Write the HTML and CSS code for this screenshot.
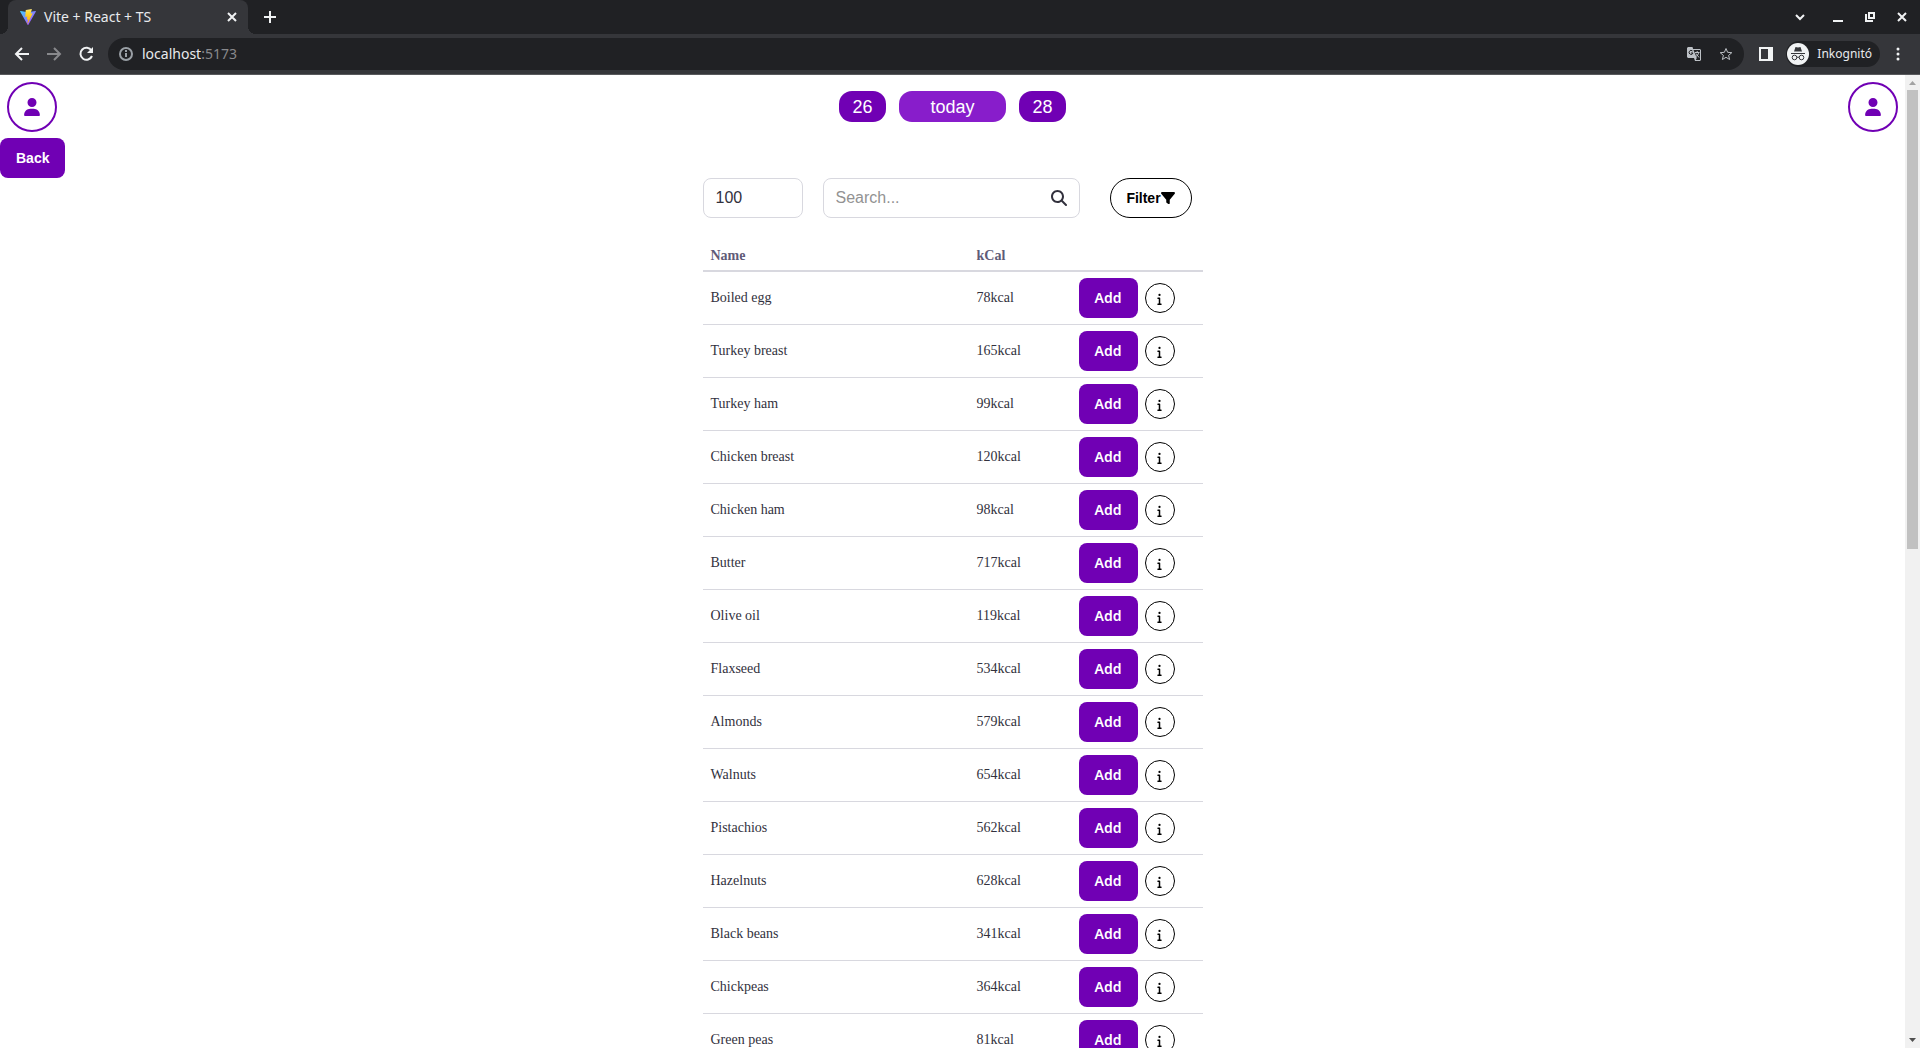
FILE: index.html
```html
<!DOCTYPE html>
<html lang="en">
<head>
<meta charset="utf-8">
<title>Vite + React + TS</title>
<link rel="stylesheet" href="styles.css">
</head>
<body>
<svg class="defs" aria-hidden="true">
  <symbol id="user" viewBox="0 0 448 512"><path d="M224 256A128 128 0 1 0 224 0a128 128 0 1 0 0 256zm-45.700 48C79.800 304 0 383.800 0 482.300C0 498.700 13.300 512 29.700 512H418.300c16.400 0 29.700-13.300 29.700-29.700C448 383.800 368.200 304 269.700 304H178.300z"/></symbol>
  <symbol id="info" viewBox="0 0 192 512"><path d="M48 80a48 48 0 1 1 96 0A48 48 0 1 1 48 80zM0 224c0-17.700 14.300-32 32-32H96c17.700 0 32 14.300 32 32V448h32c17.700 0 32 14.300 32 32s-14.300 32-32 32H32c-17.700 0-32-14.300-32-32s14.300-32 32-32H64V256H32c-17.700 0-32-14.300-32-32z"/></symbol>
</svg>

<header class="browser">
  <div class="tabs">
    <div class="tab">
      <svg class="favicon" viewBox="0 0 16 16">
        <defs>
          <linearGradient id="vite-v" x1="0" y1="0" x2="1" y2="1"><stop offset="0" stop-color="#41d1ff"/><stop offset="1" stop-color="#bd34fe"/></linearGradient>
          <linearGradient id="vite-bolt" x1="0" y1="0" x2="0" y2="1"><stop offset="0" stop-color="#ffea83"/><stop offset=".2" stop-color="#ffdd35"/><stop offset="1" stop-color="#ffa800"/></linearGradient>
        </defs>
        <path fill="url(#vite-v)" d="M15.900 2.500 8.400 15.700c-.2.300-.6.300-.8 0L.1 2.500c-.2-.3.100-.7.500-.6L8 3.200l7.400-1.300c.4-.1.700.3.500.6z"/>
        <path fill="url(#vite-bolt)" d="M11.800 0 6 1.100c-.1 0-.3.100-.3.300l-.4 6.400c0 .2.200.3.300.2l1.700-.4-.5 2.700c0 .2.100.3.300.2l1.100-.3-.8 4c0 .3.300.4.400.2l4.800-9.800c.1-.2 0-.4-.2-.3l-1.800.3 1.200-4.200z"/>
      </svg>
      <span class="tab-title">Vite + React + TS</span>
      <button class="chrome-button" aria-label="Close tab"><svg width="10" height="10" viewBox="0 0 10 10"><path d="m1 1 8 8M9 1 1 9"/></svg></button>
    </div>
    <button class="chrome-button new-tab" aria-label="New tab"><svg width="12" height="12" viewBox="0 0 12 12"><path d="M6 0v12M0 6h12"/></svg></button>
    <div class="window-buttons">
      <button class="chrome-button tab-search" aria-label="Search tabs"><svg width="10" height="10" viewBox="0 0 10 10"><path d="m1 3 4 4 4-4"/></svg></button>
      <button class="chrome-button" aria-label="Minimize"><svg width="10" height="10" viewBox="0 0 10 10"><path d="M0 9h10"/></svg></button>
      <button class="chrome-button" aria-label="Restore"><svg width="10" height="10" viewBox="0 0 10 10"><path d="M4 1h5v5H4zM1 2v7h7"/></svg></button>
      <button class="chrome-button" aria-label="Close"><svg width="10" height="10" viewBox="0 0 10 10"><path d="m1 1 8 8M9 1 1 9"/></svg></button>
    </div>
  </div>
  <div class="toolbar">
    <div class="history">
      <button class="chrome-button" aria-label="Back"><svg width="16" height="16" viewBox="0 0 16 16"><path d="M15 8H2M8 2 2 8l6 6"/></svg></button>
      <button class="chrome-button dim" aria-label="Forward"><svg width="16" height="16" viewBox="0 0 16 16"><path d="M1 8h13M8 2l6 6-6 6"/></svg></button>
      <button class="chrome-button" aria-label="Reload"><svg width="16" height="16" viewBox="0 0 16 16"><path d="M13.500 4.500A6 6 0 1 0 14 10"/><path class="solid" d="M15 1v6H9z"/></svg></button>
    </div>
    <div class="omnibox">
      <svg class="site-info" width="14" height="14" viewBox="0 0 14 14"><circle cx="7" cy="7" r="6"/><path d="M7 6v4M7 3v2"/></svg>
      <span class="url">localhost<span class="port">:5173</span></span>
      <button class="chrome-button translate" aria-label="Translate"><svg width="14" height="14" viewBox="0 0 14 14"><path class="solid" d="M1 0h4.500l.6 2H13l1 1v10l-1 1H8l-1-3H1l-1-1V1z"/><path fill="#202124" stroke="none" d="M6.500 3H13v10H8.800l1-2z"/><path class="cut" d="M5.500 4A2 2 0 1 0 6 6H4"/><path stroke-width="1" d="M8 5.500h4.500M10.200 4v1.500M11.700 5.500c-.3 2-1.500 3.300-3 4.300M9 6.500l3 4"/></svg></button>
      <button class="chrome-button star" aria-label="Bookmark"><svg width="14" height="14" viewBox="0 0 14 14"><path d="m7 1.500 1.600 3.800 4.200.4-3.200 2.700 1 4.100L7 10.300l-3.600 2.200 1-4.100-3.200-2.700 4.200-.4z"/></svg></button>
    </div>
    <button class="chrome-button" aria-label="Side panel"><svg width="14" height="14" viewBox="0 0 14 14"><path class="solid" fill-rule="evenodd" d="M0 0h14v14H0zM2 2v10h7V2z"/></svg></button>
    <button class="profile">
      <svg width="22" height="22" viewBox="0 0 22 22"><circle cx="11" cy="11" r="11" fill="#f1f3f4"/><path fill="#35363a" d="M8.500 4 11 4.500 13.500 4 15 8.500H7zM4 10h14v1H4z"/><g fill="none" stroke="#35363a"><circle cx="7.500" cy="14.500" r="2.300"/><circle cx="14.500" cy="14.500" r="2.300"/><path d="M9.800 14.500q1.200-1 2.400 0"/></g></svg>
      Inkognitó
    </button>
    <button class="chrome-button" aria-label="Menu"><svg width="4" height="14" viewBox="0 0 4 14"><circle class="solid" cx="2" cy="2" r="1.500"/><circle class="solid" cx="2" cy="7" r="1.500"/><circle class="solid" cx="2" cy="12" r="1.500"/></svg></button>
  </div>
</header>

<div class="viewport">
  <main class="page">
    <nav class="day-bar">
      <a class="avatar" href="#profile" aria-label="Profile"><svg width="16" height="18"><use href="#user"/></svg></a>
      <div class="days">
        <button class="day">26</button>
        <button class="day today">today</button>
        <button class="day">28</button>
      </div>
      <a class="avatar" href="#account" aria-label="Account"><svg width="16" height="18"><use href="#user"/></svg></a>
    </nav>
    <button class="primary">Back</button>

    <section class="foods">
      <form class="controls">
        <input class="field amount" type="text" value="100" aria-label="Amount">
        <div class="field search">
          <input type="text" placeholder="Search..." aria-label="Search">
          <svg width="16" height="16" viewBox="0 0 512 512"><path d="M416 208c0 45.900-14.900 88.300-40 122.700L502.600 457.400c12.500 12.500 12.500 32.800 0 45.300s-32.800 12.500-45.300 0L330.700 376c-34.400 25.200-76.800 40-122.700 40C93.100 416 0 322.900 0 208S93.100 0 208 0S416 93.100 416 208zM208 352a144 144 0 1 0 0-288 144 144 0 1 0 0 288z"/></svg>
        </div>
        <button class="filter" type="button">Filter<svg width="14" height="14" viewBox="0 0 512 512"><path d="M3.900 54.900C10.500 40.900 24.500 32 40 32H472c15.500 0 29.500 8.900 36.100 22.900s4.600 30.500-5.200 42.500L320 320.900V448c0 12.100-6.800 23.200-17.700 28.600s-23.800 4.300-33.500-3l-64-48c-8.100-6-12.800-15.500-12.800-25.600V320.900L9 97.300C-.7 85.400-2.800 68.800 3.900 54.900z"/></svg></button>
      </form>
      <table class="food-table">
        <thead><tr><th class="name">Name</th><th class="kcal">kCal</th><th></th></tr></thead>
        <tbody>
          <tr><td>Boiled egg</td><td>78kcal</td><td><div class="actions"><button class="primary add">Add</button><button class="info" aria-label="Details"><svg width="5" height="12"><use href="#info"/></svg></button></div></td></tr>
          <tr><td>Turkey breast</td><td>165kcal</td><td><div class="actions"><button class="primary add">Add</button><button class="info" aria-label="Details"><svg width="5" height="12"><use href="#info"/></svg></button></div></td></tr>
          <tr><td>Turkey ham</td><td>99kcal</td><td><div class="actions"><button class="primary add">Add</button><button class="info" aria-label="Details"><svg width="5" height="12"><use href="#info"/></svg></button></div></td></tr>
          <tr><td>Chicken breast</td><td>120kcal</td><td><div class="actions"><button class="primary add">Add</button><button class="info" aria-label="Details"><svg width="5" height="12"><use href="#info"/></svg></button></div></td></tr>
          <tr><td>Chicken ham</td><td>98kcal</td><td><div class="actions"><button class="primary add">Add</button><button class="info" aria-label="Details"><svg width="5" height="12"><use href="#info"/></svg></button></div></td></tr>
          <tr><td>Butter</td><td>717kcal</td><td><div class="actions"><button class="primary add">Add</button><button class="info" aria-label="Details"><svg width="5" height="12"><use href="#info"/></svg></button></div></td></tr>
          <tr><td>Olive oil</td><td>119kcal</td><td><div class="actions"><button class="primary add">Add</button><button class="info" aria-label="Details"><svg width="5" height="12"><use href="#info"/></svg></button></div></td></tr>
          <tr><td>Flaxseed</td><td>534kcal</td><td><div class="actions"><button class="primary add">Add</button><button class="info" aria-label="Details"><svg width="5" height="12"><use href="#info"/></svg></button></div></td></tr>
          <tr><td>Almonds</td><td>579kcal</td><td><div class="actions"><button class="primary add">Add</button><button class="info" aria-label="Details"><svg width="5" height="12"><use href="#info"/></svg></button></div></td></tr>
          <tr><td>Walnuts</td><td>654kcal</td><td><div class="actions"><button class="primary add">Add</button><button class="info" aria-label="Details"><svg width="5" height="12"><use href="#info"/></svg></button></div></td></tr>
          <tr><td>Pistachios</td><td>562kcal</td><td><div class="actions"><button class="primary add">Add</button><button class="info" aria-label="Details"><svg width="5" height="12"><use href="#info"/></svg></button></div></td></tr>
          <tr><td>Hazelnuts</td><td>628kcal</td><td><div class="actions"><button class="primary add">Add</button><button class="info" aria-label="Details"><svg width="5" height="12"><use href="#info"/></svg></button></div></td></tr>
          <tr><td>Black beans</td><td>341kcal</td><td><div class="actions"><button class="primary add">Add</button><button class="info" aria-label="Details"><svg width="5" height="12"><use href="#info"/></svg></button></div></td></tr>
          <tr><td>Chickpeas</td><td>364kcal</td><td><div class="actions"><button class="primary add">Add</button><button class="info" aria-label="Details"><svg width="5" height="12"><use href="#info"/></svg></button></div></td></tr>
          <tr><td>Green peas</td><td>81kcal</td><td><div class="actions"><button class="primary add">Add</button><button class="info" aria-label="Details"><svg width="5" height="12"><use href="#info"/></svg></button></div></td></tr>
        </tbody>
      </table>
    </section>
  </main>
  <div class="scrollbar" aria-hidden="true">
    <svg width="15" height="15" viewBox="0 0 15 15"><path fill="#a3a3a3" d="M4 10h7L7.500 6z"/></svg>
    <div class="track"><div class="thumb"></div></div>
    <svg width="15" height="15" viewBox="0 0 15 15"><path fill="#505050" d="M4 5h7L7.500 9z"/></svg>
  </div>
</div>
</body>
</html>
```
FILE: styles.css
```css
* { box-sizing: border-box; }

body {
  margin: 0;
  height: 100vh;
  display: flex;
  flex-direction: column;
  overflow: hidden;
  background: #fff;
  color: #32313d;
  font-family: "Liberation Serif", "Times New Roman", serif;
  font-size: 14px;
}

button { font: inherit; border: 0; padding: 0; cursor: pointer; }
svg { display: block; flex: none; }
.defs { position: absolute; width: 0; height: 0; }

/* Browser frame */
.browser {
  flex: none;
  background: #202124;
  color: #e8eaed;
  font-family: "Noto Sans", sans-serif;
}
.tabs { display: flex; align-items: center; height: 34px; padding-left: 8px; }
.tab {
  position: relative;
  display: flex;
  align-items: center;
  gap: 8px;
  width: 240px;
  height: 34px;
  padding: 0 11px 0 12px;
  background: #35363a;
  border-radius: 8px 8px 0 0;
}
.tab::before, .tab::after {
  content: "";
  position: absolute;
  bottom: 0;
  width: 8px;
  height: 8px;
}
.tab::before { left: -8px; background: radial-gradient(circle at 0 0, transparent 8px, #35363a 8px); }
.tab::after { right: -8px; background: radial-gradient(circle at 100% 0, transparent 8px, #35363a 8px); }
.favicon { width: 16px; height: 16px; }
.tab-title { flex: 1; padding-bottom: 2px; font-size: 14px; }
.new-tab { margin-left: 16px; }
.window-buttons { display: flex; gap: 22px; margin-left: auto; padding-right: 13px; }
.tab-search { margin-right: 6px; }
.chrome-button { background: none; color: #f1f3f4; fill: none; stroke: currentColor; stroke-width: 2; }
.chrome-button .solid { fill: currentColor; stroke: none; }
.chrome-button .cut { stroke: #202124; stroke-width: 1; }
.dim { color: #88898c; }

.toolbar {
  display: flex;
  align-items: center;
  height: 41px;
  padding: 0 20px 1px 14px;
  background: #35363a;
  border-bottom: 1px solid #58595c;
}
.history { display: flex; gap: 16px; margin-right: 14px; }
.omnibox {
  flex: 1;
  display: flex;
  align-items: center;
  height: 32px;
  margin-right: 15px;
  padding: 0 11px;
  border-radius: 16px;
  background: #202124;
}
.site-info { fill: none; stroke: #9aa0a6; stroke-width: 2; }
.url { flex: 1; margin-left: 9px; font-size: 14px; }
.port { color: #88898c; }
.translate, .star { color: #bdc1c6; }
.star { margin-left: 18px; stroke-width: 1; }
.profile {
  display: flex;
  align-items: center;
  gap: 8px;
  height: 26px;
  margin: 0 16px 0 13px;
  padding: 0 8px 0 1px;
  border-radius: 13px;
  background: #202124;
  color: #e8eaed;
  font-size: 12px;
}

/* Page */
.viewport { flex: 1; min-height: 0; display: flex; }
.page { flex: 1; overflow: hidden; }
.day-bar {
  display: flex;
  align-items: center;
  justify-content: space-between;
  padding: 7px 7px 6px;
}
.avatar {
  display: flex;
  align-items: center;
  justify-content: center;
  width: 50px;
  height: 50px;
  border: 2px solid #7000b4;
  border-radius: 50%;
  fill: #7000b4;
}
.days { display: flex; gap: 13px; padding-bottom: 1px; }
.day {
  min-width: 47px;
  height: 31px;
  border-radius: 13px;
  background: #7000b4;
  color: #fff;
  font-family: "Liberation Sans", Arial, sans-serif;
  font-size: 18px;
  line-height: 20px;
}
.today { min-width: 107px; background: #881dcb; }

.primary {
  display: block;
  height: 40px;
  padding: 0 16px;
  border-radius: 8px;
  background: #7000b4;
  color: #fff;
  font-family: "Liberation Sans", Arial, sans-serif;
  font-size: 14px;
  font-weight: 700;
}
.add { width: 59px; font-family: "Noto Sans", sans-serif; font-weight: 600; }

.foods { width: 500px; max-width: 100%; margin: 0 auto; }
.controls { display: flex; align-items: center; padding-right: 11px; }
.field {
  height: 40px;
  padding: 0 12px;
  border: 1px solid #d8d8df;
  border-radius: 8px;
  background: #fff;
  color: #32313d;
  font-family: "Liberation Sans", Arial, sans-serif;
  font-size: 16px;
}
.amount { width: 100px; }
.search { display: flex; align-items: center; flex: 1; margin: 0 30px 0 20px; fill: #32313d; }
.search input { flex: 1; min-width: 0; padding: 0; border: 0; outline: 0; font: inherit; color: inherit; }
.search input::placeholder { color: #929292; }
.filter {
  display: flex;
  align-items: center;
  justify-content: center;
  width: 82px;
  height: 40px;
  border: 1px solid #000;
  border-radius: 20px;
  background: #fff;
  color: #000;
  font-family: "Liberation Sans", Arial, sans-serif;
  font-size: 14px;
  font-weight: 700;
}

.food-table {
  width: 100%;
  margin-top: 24px;
  border-spacing: 0;
  table-layout: fixed;
  line-height: 16px;
}
.food-table th {
  padding: 6px 8px;
  border-bottom: 2px solid #d8d8df;
  color: #5f5b78;
  text-align: left;
}
.food-table td { padding: 6px 8px; border-bottom: 1px solid #d8d8df; }
.name { width: 266px; }
.kcal { width: 102px; }
.actions { display: flex; align-items: center; gap: 7px; }
.info {
  display: flex;
  align-items: center;
  justify-content: center;
  width: 30px;
  height: 30px;
  padding: 2px 1px 0 0;
  border: 1px solid #000;
  border-radius: 50%;
  background: #fff;
}

/* Scrollbar */
.scrollbar { display: flex; flex-direction: column; width: 15px; background: #f1f1f1; }
.track { flex: 1; padding: 0 2px; }
.thumb { height: 459px; background: #c1c1c1; }
```
